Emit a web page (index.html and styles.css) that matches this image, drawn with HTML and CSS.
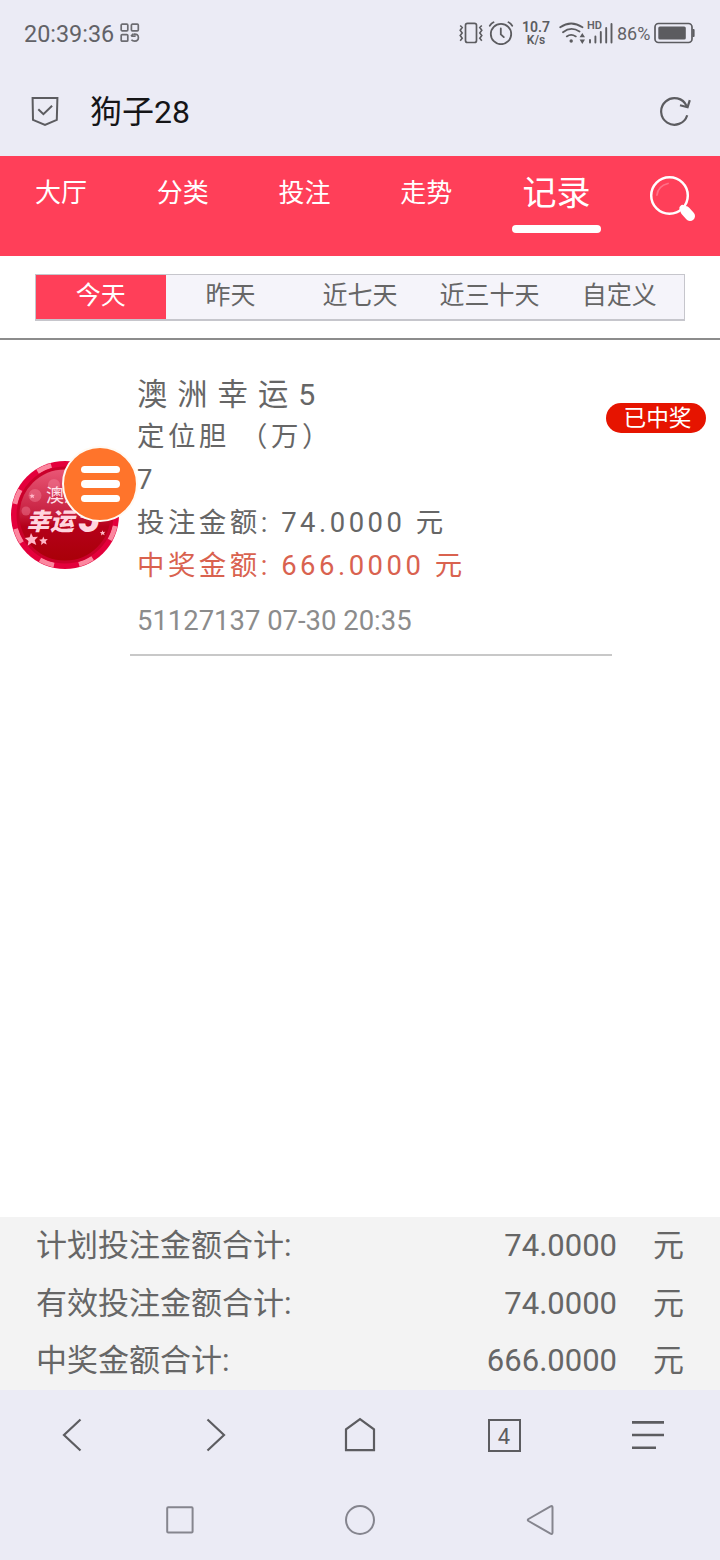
FILE: index.html
```html
<!DOCTYPE html>
<html lang="zh-CN">
<head>
<meta charset="utf-8">
<title>狗子28</title>
<link rel="stylesheet" href="styles.css">
</head>
<body>
<div class="screen">
  <header class="chrome">
    <div class="status">
      <span class="clock">20:39:36</span>
      <svg class="apps" width="20" height="20" viewBox="0 0 20 20" fill="none" stroke="#6c6c71" stroke-width="1.7">
        <rect x="1.2" y="1.2" width="6.6" height="6.6" rx="1"/><rect x="11.4" y="1.2" width="6.9" height="6.6" rx="1"/><rect x="1.2" y="11.6" width="6.6" height="6.6" rx="1"/>
        <path d="M11.2 13.2h4.4M13.6 11.2q4.8-.6 4.8 3.4 0 3.6-3.6 3.6-2.2 0-3.4-1.4M13.2 10.8l-2.2 2.4"/>
      </svg>
      <svg class="vibrate" width="24" height="22" viewBox="0 0 24 22" fill="none" stroke="#5c5c60" stroke-width="1.7">
        <rect x="6.5" y="1.3" width="11" height="19.2" rx="2"/>
        <path d="M1.2 3.5l2 2-2 2.7 2 2.7-2 2.7 2 2.7-2 2.4M22.8 3.5l-2 2 2 2.7-2 2.7 2 2.7-2 2.7 2 2.4" stroke-width="1.6"/>
      </svg>
      <svg class="alarm" width="26" height="24" viewBox="0 0 26 24" fill="none" stroke="#5c5c60" stroke-width="1.8" stroke-linecap="round">
        <circle cx="13" cy="13" r="10.2"/><path d="M12.8 7.5v5.8l3 2.8M1.8 4.7Q3.2 2.4 5.5 1.3M24.2 4.7Q22.8 2.4 20.5 1.3"/>
      </svg>
      <span class="speed"><b>10.7</b><b class="unit">K/s</b></span>
      <svg class="wifi" width="27" height="22" viewBox="0 0 27 22" fill="none" stroke="#5c5c60" stroke-width="1.8" stroke-linecap="round">
        <path d="M1.2 5.2Q12 -2.2 23.5 5.2M4 10.2Q12 4 20.5 9.5M7.8 14.4Q12 11.4 16.8 14.4"/>
        <circle cx="12.2" cy="19" r="1.7" fill="#5c5c60" stroke="none"/>
        <path d="M20.6 15.3l2.7-4.3 2.7 4.3zM20.6 17.6l2.7 4.3 2.7-4.3z" fill="#5c5c60" stroke="none"/>
      </svg>
      <span class="signal"><b class="hd">HD</b>
        <svg width="26" height="22" viewBox="0 0 26 22" stroke="#5c5c60" stroke-width="1.9" stroke-linecap="round"><path d="M3 18v2.5M8.4 14.5v6M13.8 10v10.5M19.2 6v14.5M24.5 2v18.5"/></svg>
      </span>
      <span class="percent">86%</span>
      <svg class="battery" width="41" height="22" viewBox="0 0 41 22">
        <rect x="1" y="1.5" width="37" height="19" rx="3.5" fill="none" stroke="#5c5c60" stroke-width="1.7"/>
        <rect x="4.3" y="4.5" width="27.5" height="13" rx="1.6" fill="#5c5c60"/><path d="M38.5 7h1.2q.9 0 .9 1v6q0 1-.9 1h-1.2z" fill="#5c5c60"/>
      </svg>
    </div>
    <div class="address">
      <svg class="shield" width="28" height="31" viewBox="0 0 28 31" fill="none" stroke="#5c5c60" stroke-width="2">
        <path d="M1.6 2h24.8l-.6 21.8L14 29 2 23.8z"/><path d="M7.3 13.2l5.1 5 8.7-8.5"/>
      </svg>
      <h1 class="site">狗子28</h1>
      <svg class="reload" width="34" height="32" viewBox="0 0 34 32" fill="none" stroke="#5c5c60" stroke-width="2.2">
        <path d="M29.2 20.2A13.3 13.3 0 1 1 28.6 11"/><path d="M22 10.2L29.6 12.2l2.2-7"/>
      </svg>
    </div>
  </header>

  <nav class="nav">
    <a class="nav-item">大厅</a><a class="nav-item">分类</a><a class="nav-item">投注</a><a class="nav-item">走势</a>
    <a class="nav-item current">记录</a>
    <svg class="search" width="48" height="48" viewBox="0 0 48 48" fill="none" stroke="#fff" stroke-linecap="round">
      <circle cx="21.5" cy="20.5" r="18.3" stroke-width="2.5"/>
      <path d="M9 20Q10 11 20 8.5" stroke="#ff6f86" stroke-width="1.8"/>
      <path d="M34.5 33l2 2" stroke-width="6"/><path d="M37.5 36l4.5 5" stroke-width="10"/>
    </svg>
  </nav>

  <section class="filters">
    <div class="tabs"><span class="tab active">今天</span><span class="tab">昨天</span><span class="tab">近七天</span><span class="tab">近三十天</span><span class="tab">自定义</span></div>
  </section>

  <main class="records">
    <article class="record">
      <div class="logo">
        <svg width="108" height="108" viewBox="0 0 108 108">
          <defs><linearGradient id="face" x1="0" y1="0" x2="0" y2="1"><stop offset="0" stop-color="#ea5877"/><stop offset=".45" stop-color="#c92444"/><stop offset=".62" stop-color="#b5001a"/><stop offset="1" stop-color="#a90008"/></linearGradient></defs>
          <circle cx="54" cy="54" r="54" fill="#e4003c"/>
          <circle cx="54" cy="54" r="51.3" fill="none" stroke="#fb879f" stroke-width="4.8" stroke-dasharray="15 25.29" stroke-dashoffset="-11"/>
          <circle cx="54" cy="54" r="47" fill="url(#face)" stroke="#c9002a" stroke-width="3"/>
          <g fill="#f78ba2" opacity=".4"><circle cx="24" cy="34.5" r="6.5"/><circle cx="15" cy="50" r="4.5"/><circle cx="43" cy="24" r="6"/></g>
          <g fill="#ffb7c7"><path id="star" d="M20 72l2 4 5-.3-3.3 3.5 1.6 4.8-4.6-2.2-4 3 .8-4.8-3.7-3.1 4.8-.7z"/><use href="#star" transform="translate(19 28) scale(.66)"/><use href="#star" transform="translate(83 39) scale(.42)"/><use href="#star" transform="translate(12.5 2) scale(.42)"/></g>
          <text class="coin-top" x="35" y="41">澳洲</text>
          <text class="coin-name" x="15" y="69">幸运</text><text class="coin-five" x="67" y="70.5">5</text>
        </svg>
        <button class="float-menu"><i></i><i></i><i></i></button>
      </div>
      <div class="details">
        <h2 class="game">澳洲幸运5</h2>
        <p>定位胆 （万）</p>
        <p>7</p>
        <p>投注金额: 74.0000 元</p>
        <p class="win">中奖金额: 666.0000 元</p>
        <p class="date">51127137 07-30 20:35</p>
      </div>
      <span class="badge">已中奖</span>
    </article>
  </main>

  <section class="totals">
    <div class="total"><span>计划投注金额合计:</span><span class="sum">74.0000</span><span>元</span></div>
    <div class="total"><span>有效投注金额合计:</span><span class="sum">74.0000</span><span>元</span></div>
    <div class="total"><span>中奖金额合计:</span><span class="sum">666.0000</span><span>元</span></div>
  </section>

  <footer class="toolbar">
    <svg width="34" height="36" viewBox="0 0 34 36"><path d="M25.5 2.5L9 18l16.5 15.5"/></svg>
    <svg width="34" height="36" viewBox="0 0 34 36"><path d="M8.5 2.5L25 18 8.5 33.5"/></svg>
    <svg width="34" height="36" viewBox="0 0 34 36"><path d="M3 33.2V12.4L17 2l14 10.4v20.8z"/></svg>
    <span class="pages">4</span>
    <svg width="34" height="36" viewBox="0 0 34 36"><path d="M1 5.4h32M1 18h32M1 30.7h24" stroke-width="2.6"/></svg>
  </footer>
  <div class="system">
    <svg width="32" height="32" viewBox="0 0 32 32"><rect x="3.2" y="3.2" width="25.4" height="25.4" rx="1"/></svg>
    <svg width="32" height="32" viewBox="0 0 32 32"><circle cx="16" cy="16" r="14"/></svg>
    <svg width="32" height="32" viewBox="0 0 32 32"><path d="M4.5 15L26.5 2.4q2-1 2 1v25.2q0 2-2 1L4.5 17q-1.5-1 0-2z"/></svg>
  </div>
</div>
</body>
</html>
```

FILE: styles.css
```css
* { box-sizing: border-box; }
body, h1, h2, p { margin: 0; font-weight: 400; }
body { font-family: Roboto, "Noto Sans CJK SC", sans-serif; background: #fff; color: #666; }
svg { display: block; flex: none; }
.screen { width: 720px; height: 1560px; display: flex; flex-direction: column; overflow: hidden; }

.chrome { height: 156px; background: #ebebf5; }
.status { height: 66px; display: flex; align-items: center; padding-left: 24px; color: #626267; }
.clock { width: 96px; font-size: 23.4px; line-height: 28px; padding-top: 2px; }
.vibrate { margin-left: 319px; }
.alarm { margin-left: 5px; }
.speed { width: 44px; display: flex; flex-direction: column; align-items: center; font-size: 14px; line-height: 14px; color: #5c5c60; }
.speed b { font-weight: 600; }
.speed .unit { font-size: 12px; line-height: 12px; }
.wifi { margin-left: 1px; }
.signal { width: 31px; position: relative; padding-left: 1px; }
.hd { position: absolute; left: 1px; top: -2px; font-size: 11px; line-height: 11px; font-weight: 600; background: #ebebf5; }
.percent { width: 37px; font-size: 18px; white-space: nowrap; }
.address { height: 90px; display: flex; align-items: center; padding: 0 28px 0 31px; }
.site { flex: 1; margin-left: 31px; padding-top: 2px; font-size: 32px; line-height: 40px; color: #151517; }

.nav { height: 100px; background: #ff3f59; color: #fff; display: grid; grid-template-columns: repeat(4, 121.8px) 138.8px 94px; }
.nav-item { text-align: center; font-size: 26px; line-height: 36px; padding-top: 19px; }
.nav-item.current { font-size: 34px; padding-top: 19px; }
.current::after { content: ""; display: block; width: 89px; height: 8px; margin: 14px auto 0; border-radius: 4px; background: #fff; }
.search { margin: 19px 0 0 22px; }

.filters { height: 84px; padding: 18px 35px 0; border-bottom: 2px solid #8c8c8c; }
.tabs { height: 47px; display: grid; grid-template-columns: repeat(5, 1fr); border: 1px solid #c6c6cc; border-bottom-width: 2px; background: #f5f4fa; }
.tab { text-align: center; font-size: 25px; line-height: 42px; }
.tab.active { background: #ff3f59; color: #fff; }

.records { flex: 1; }
.record { display: flex; align-items: flex-start; }
.logo { width: 130px; padding: 121px 0 0 11px; position: relative; }
.coin-top { font: 18px "Noto Sans CJK SC", sans-serif; fill: #ffe0e8; }
.coin-name { font: italic 900 24px "Noto Sans CJK SC", sans-serif; fill: #ffd5df; }
.coin-five { font: italic 900 40px Roboto, sans-serif; fill: #ffd5df; }
.float-menu { position: absolute; left: 62px; top: 106px; width: 76px; height: 76px; padding: 0; border: 2px solid #fffaf3; border-radius: 50%; background: #ff742b; display: flex; flex-direction: column; align-items: center; justify-content: center; gap: 7px; }
.float-menu i { width: 39px; height: 7.5px; border-radius: 4px; background: #fff; }
.details { width: 482px; height: 316px; padding: 34px 0 0 7px; border-bottom: 2px solid #c8c8c8; font-size: 27.45px; line-height: 43px; letter-spacing: 3.5px; white-space: nowrap; }
.game { font-size: 30.3px; line-height: 42px; letter-spacing: 10px; }
.win { color: #d9624f; }
.date { margin-top: 12px; color: #8c8c8c; letter-spacing: 0; }
.badge { width: 100px; height: 30px; margin: 63px 0 0 -6px; padding-left: 3px; border-radius: 15px; background: #e61400; color: #fff; text-align: center; font-size: 22.7px; line-height: 31px; }

.totals { height: 173px; background: #f3f3f3; padding: 0 36px; }
.total { height: 57.6px; display: flex; font-size: 31px; line-height: 57px; }
.sum { margin: 0 36px 0 auto; }

.toolbar { height: 90px; background: #ebebf5; display: grid; grid-template-columns: repeat(5, 144px); place-items: center; fill: none; stroke: #5c5c60; stroke-width: 2.2; }
.pages { width: 33px; height: 33px; border: 2px solid #5c5c60; color: #5c5c60; font-size: 22px; line-height: 32px; text-align: center; }
.system { height: 80px; background: #ebebf5; display: grid; grid-template-columns: repeat(3, 180px); justify-content: center; place-items: center; fill: none; stroke: #85858e; stroke-width: 2; }
```
